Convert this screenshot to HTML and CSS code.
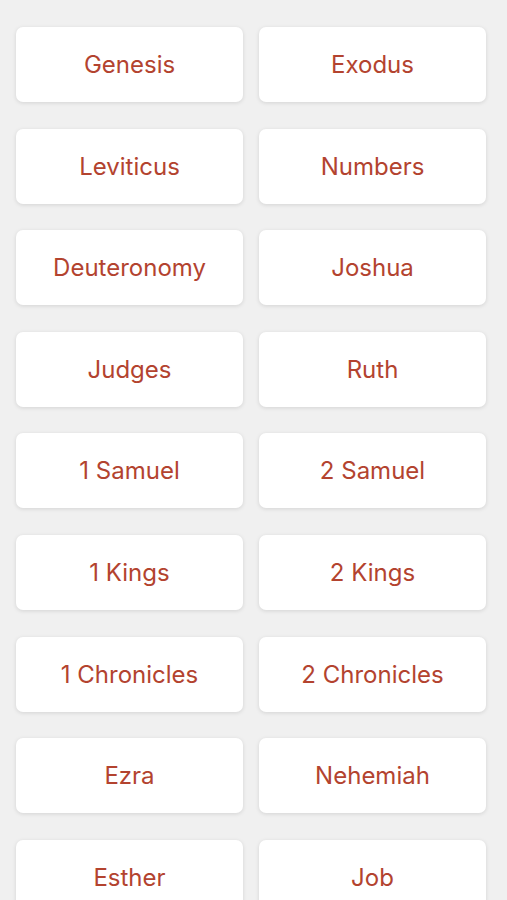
FILE: index.html
```html
<!DOCTYPE html>
<html lang="en">
<head>
  <meta charset="UTF-8">
  <meta name="viewport" content="width=device-width, initial-scale=1.0">
  <title>Books</title>
  <link rel="stylesheet" href="styles.css">
</head>
<body>
  <div class="book-grid">
    <button class="book">Genesis</button>
    <button class="book">Exodus</button>
    <button class="book">Leviticus</button>
    <button class="book">Numbers</button>
    <button class="book">Deuteronomy</button>
    <button class="book">Joshua</button>
    <button class="book">Judges</button>
    <button class="book">Ruth</button>
    <button class="book">1 Samuel</button>
    <button class="book">2 Samuel</button>
    <button class="book">1 Kings</button>
    <button class="book">2 Kings</button>
    <button class="book">1 Chronicles</button>
    <button class="book">2 Chronicles</button>
    <button class="book">Ezra</button>
    <button class="book">Nehemiah</button>
    <button class="book">Esther</button>
    <button class="book">Job</button>
  </div>
</body>
</html>
```

FILE: styles.css
```css
body {
  margin: 0;
  padding: 0;
  background: #f0f0f0;
  font-family: 'Inter', 'Roboto', sans-serif;
  overflow: hidden;
}

.book-grid {
  display: grid;
  grid-template-columns: repeat(2, 227px);
  grid-auto-rows: 75px;
  column-gap: 16px;
  row-gap: 26.6px;
  padding: 27px 21px 0 16px;
}

.book {
  border: none;
  border-radius: 7px;
  background: #ffffff;
  box-shadow: 0 1px 4px rgba(0, 0, 0, 0.12);
  color: #b3432f;
  font-family: inherit;
  font-size: 24px;
  font-weight: 400;
  cursor: pointer;
}
```
